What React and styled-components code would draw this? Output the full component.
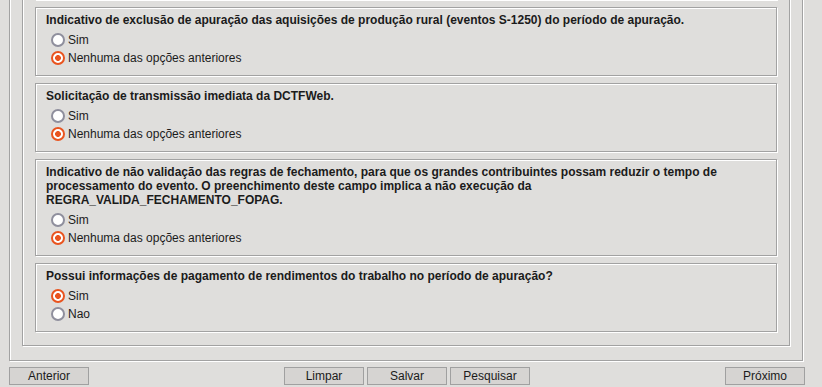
import React from 'react';
import styled, { createGlobalStyle, css } from 'styled-components';

const questions = [
  {
    id: 'excl',
    title: 'Indicativo de exclusão de apuração das aquisições de produção rural (eventos S-1250) do período de apuração.',
    options: ['Sim', 'Nenhuma das opções anteriores'],
    selected: 1,
  },
  {
    id: 'dctf',
    title: 'Solicitação de transmissão imediata da DCTFWeb.',
    options: ['Sim', 'Nenhuma das opções anteriores'],
    selected: 1,
  },
  {
    id: 'fopag',
    title: 'Indicativo de não validação das regras de fechamento, para que os grandes contribuintes possam reduzir o tempo de processamento do evento. O preenchimento deste campo implica a não execução da REGRA_VALIDA_FECHAMENTO_FOPAG.',
    options: ['Sim', 'Nenhuma das opções anteriores'],
    selected: 1,
  },
  {
    id: 'pgto',
    title: 'Possui informações de pagamento de rendimentos do trabalho no período de apuração?',
    options: ['Sim', 'Nao'],
    selected: 0,
  },
];

const GlobalStyle = createGlobalStyle`
  html, body {
    margin: 0;
    padding: 0;
    background: #dfdedc;
    overflow: hidden;
  }
  body {
    font-family: "Liberation Sans", Arial, sans-serif;
    font-size: 12px;
    color: #1b1b1b;
  }
  * { box-sizing: border-box; }
`;

const groove = css`
  border: 1px solid #a2a2a2;
  box-shadow: 1px 1px 0 #fff, inset 1px 1px 0 #fff;
`;

const Page = styled.div`
  height: 100vh;
  display: flex;
  flex-direction: column;
  overflow: hidden;
`;

// the form is scrolled: the frames' tops and the previous question are above the view
const OuterFrame = styled.div`
  ${groove}
  margin: -95px 19px 0 9px;
  padding: 12px 12px 14px;
`;

const InnerFrame = styled.div`
  ${groove}
  padding: 12px 12px 13px;
  display: flex;
  flex-direction: column;
  gap: 7px;
`;

const QuestionBox = styled.div`
  ${groove}
  padding: 5px 10px 8px;
`;

const ScrolledBox = styled.div`
  ${groove}
  height: 69px;
`;

const Title = styled.div`
  font-weight: bold;
  line-height: 14px;
`;

const Options = styled.div`
  margin-top: 4px;
  padding-left: 5px;
  display: flex;
  flex-direction: column;
`;

const Option = styled.label`
  display: flex;
  align-items: center;
  gap: 3px;
  height: 18px;
  line-height: 18px;
`;

const Radio = styled.input`
  appearance: none;
  margin: 0;
  width: 14px;
  height: 14px;
  border-radius: 50%;
  border: 2px solid #8f8f9d;
  background: #fff;
  flex: none;

  &:checked {
    border-color: #e9541f;
    background: radial-gradient(circle, #e9541f 0 2.6px, #fff 3.2px);
  }
`;

const ButtonRow = styled.div`
  margin-top: 6px;
  padding: 0 17px 0 9px;
  display: flex;
  justify-content: space-between;
`;

const ButtonGroup = styled.div`
  display: flex;
  gap: 3px;
`;

const Button = styled.button`
  width: 80px;
  height: 18px;
  padding: 0;
  border: 1px solid #a0a0a0;
  background: #d6d4d2;
  font-family: "Liberation Sans", Arial, sans-serif;
  font-size: 12px;
  line-height: 16px;
  color: #1b1b1b;
`;

const Question = ({ q }) => (
  <QuestionBox>
    <Title>{q.title}</Title>
    <Options>
      {q.options.map((opt, i) => (
        <Option key={opt}>
          <Radio type="radio" name={q.id} defaultChecked={i === q.selected} />
          {opt}
        </Option>
      ))}
    </Options>
  </QuestionBox>
);

export default function App() {
  return (
    <Page>
      <GlobalStyle />
      <OuterFrame>
        <InnerFrame>
          <ScrolledBox />
          {questions.map((q) => (
            <Question key={q.id} q={q} />
          ))}
        </InnerFrame>
      </OuterFrame>
      <ButtonRow>
        <Button>Anterior</Button>
        <ButtonGroup>
          <Button>Limpar</Button>
          <Button>Salvar</Button>
          <Button>Pesquisar</Button>
        </ButtonGroup>
        <Button>Próximo</Button>
      </ButtonRow>
    </Page>
  );
}
